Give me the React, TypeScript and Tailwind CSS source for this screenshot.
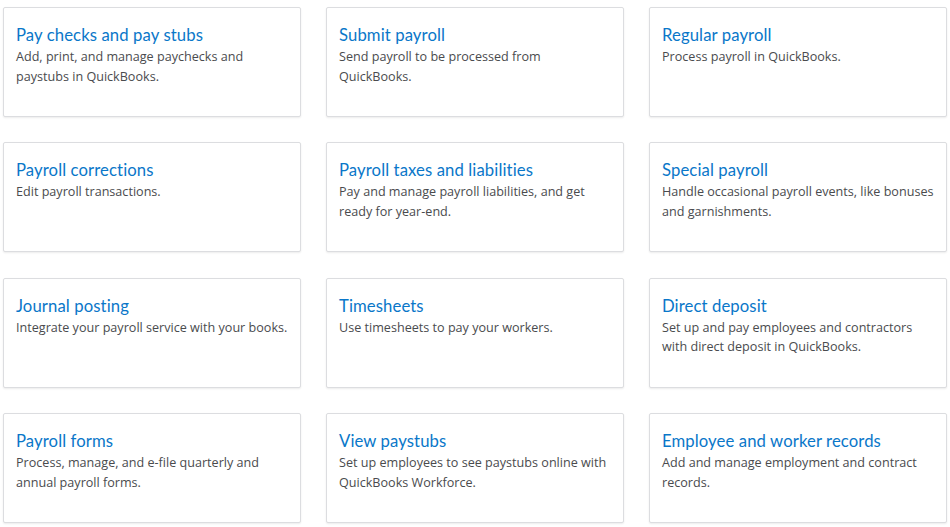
import React from 'react';

interface Tile {
    title: string;
    text: string;
}

const tiles: Tile[] = [
    { title: 'Pay checks and pay stubs', text: 'Add, print, and manage paychecks and paystubs in QuickBooks.' },
    { title: 'Submit payroll', text: 'Send payroll to be processed from QuickBooks.' },
    { title: 'Regular payroll', text: 'Process payroll in QuickBooks.' },
    { title: 'Payroll corrections', text: 'Edit payroll transactions.' },
    { title: 'Payroll taxes and liabilities', text: 'Pay and manage payroll liabilities, and get ready for year-end.' },
    { title: 'Special payroll', text: 'Handle occasional payroll events, like bonuses and garnishments.' },
    { title: 'Journal posting', text: 'Integrate your payroll service with your books.' },
    { title: 'Timesheets', text: 'Use timesheets to pay your workers.' },
    { title: 'Direct deposit', text: 'Set up and pay employees and contractors with direct deposit in QuickBooks.' },
    { title: 'Payroll forms', text: 'Process, manage, and e-file quarterly and annual payroll forms.' },
    { title: 'View paystubs', text: 'Set up employees to see paystubs online with QuickBooks Workforce.' },
    { title: 'Employee and worker records', text: 'Add and manage employment and contract records.' },
];

const App: React.FC = () => {
    return (
        <div className="w-[950px] h-[527px] bg-white overflow-hidden">
            <div className="grid grid-cols-[298px_298px_298px] gap-x-[25px] gap-y-[25.4px] pl-[3px] pt-[7px]">
                {tiles.map((tile) => (
                    <div
                        key={tile.title}
                        className="h-[110px] rounded-[2px] border border-[#dcdde0] bg-white shadow-[0_1px_2px_rgba(0,0,0,0.08)] pl-[12px] pr-[9px] pt-[16px]"
                    >
                        {/* title is a link-style heading */}
                        <h3 className="font-['Lato',sans-serif] text-[16.7px] leading-[22px] text-[#0a77c9] tracking-[0.1px]">
                            {tile.title}
                        </h3>
                        <p className="font-['Open_Sans',sans-serif] text-[12.6px] leading-[19.5px] text-[#4a4b4e] mt-[1px]">
                            {tile.text}
                        </p>
                    </div>
                ))}
            </div>
        </div>
    );
};

export default App;
